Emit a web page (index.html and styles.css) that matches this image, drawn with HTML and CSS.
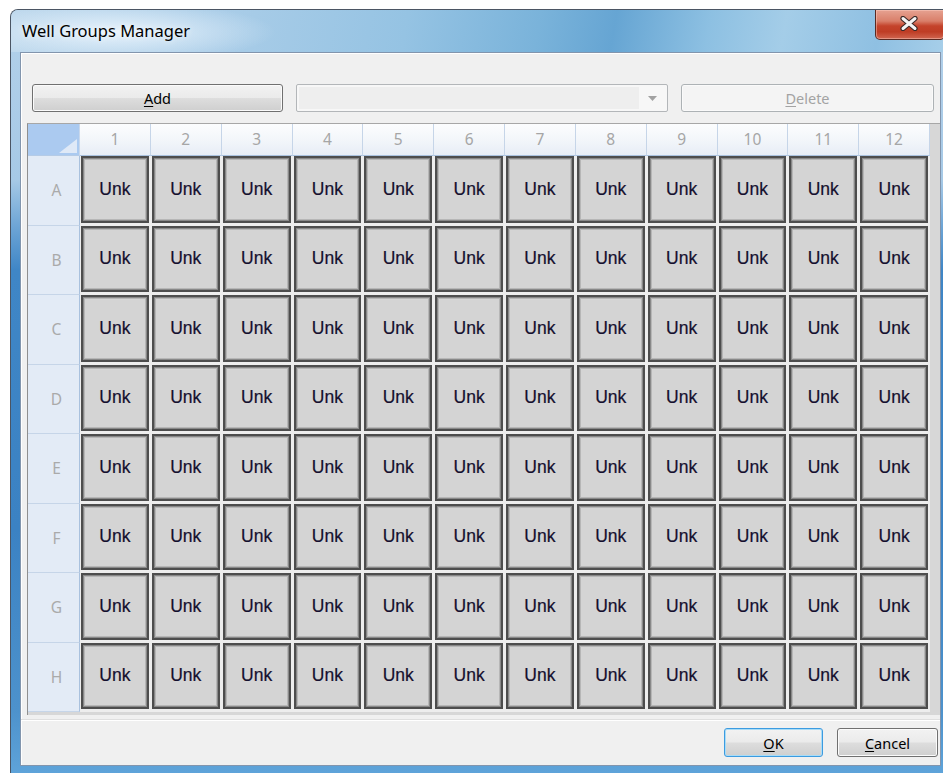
FILE: index.html
```html
<!DOCTYPE html>
<html lang="en">
<head>
<meta charset="utf-8">
<title>Well Groups Manager</title>
<link rel="stylesheet" href="styles.css">
</head>
<body>
<div class="window">
  <div class="titlebar">
    <span class="title">Well Groups Manager</span>
    <button class="close" type="button" aria-label="Close">
      <svg width="20" height="15" viewBox="0 0 20 15">
        <path d="M4 2.5 L16 12.5 M16 2.5 L4 12.5" stroke="#3b2a28" stroke-width="5.2" stroke-linecap="round" fill="none"/>
        <path d="M4 2.5 L16 12.5 M16 2.5 L4 12.5" stroke="#f4f4f4" stroke-width="3" stroke-linecap="round" fill="none"/>
      </svg>
    </button>
  </div>

  <div class="client">
    <div class="toolbar">
      <button class="btn add" type="button"><u>A</u>dd</button>
      <div class="combo">
        <span class="combo-field"></span>
        <span class="combo-arrow">
          <svg width="9" height="5" viewBox="0 0 9 5"><path d="M0 0 H9 L4.5 5 Z" fill="#a2a2a2"/></svg>
        </span>
      </div>
      <button class="btn delete" type="button" disabled><u>D</u>elete</button>
    </div>

    <div class="plate">
      <div class="plate-grid">
        <div class="corner">
          <svg width="18" height="14" viewBox="0 0 18 14"><path d="M0 14 L18 0 L18 14 Z" fill="#dfe9f7"/></svg>
        </div>
        <div class="colhead">1</div>
        <div class="colhead">2</div>
        <div class="colhead">3</div>
        <div class="colhead">4</div>
        <div class="colhead">5</div>
        <div class="colhead">6</div>
        <div class="colhead">7</div>
        <div class="colhead">8</div>
        <div class="colhead">9</div>
        <div class="colhead">10</div>
        <div class="colhead">11</div>
        <div class="colhead">12</div>

        <div class="rowhead">A</div>
        <div class="well">Unk</div><div class="well">Unk</div><div class="well">Unk</div><div class="well">Unk</div>
        <div class="well">Unk</div><div class="well">Unk</div><div class="well">Unk</div><div class="well">Unk</div>
        <div class="well">Unk</div><div class="well">Unk</div><div class="well">Unk</div><div class="well">Unk</div>

        <div class="rowhead">B</div>
        <div class="well">Unk</div><div class="well">Unk</div><div class="well">Unk</div><div class="well">Unk</div>
        <div class="well">Unk</div><div class="well">Unk</div><div class="well">Unk</div><div class="well">Unk</div>
        <div class="well">Unk</div><div class="well">Unk</div><div class="well">Unk</div><div class="well">Unk</div>

        <div class="rowhead">C</div>
        <div class="well">Unk</div><div class="well">Unk</div><div class="well">Unk</div><div class="well">Unk</div>
        <div class="well">Unk</div><div class="well">Unk</div><div class="well">Unk</div><div class="well">Unk</div>
        <div class="well">Unk</div><div class="well">Unk</div><div class="well">Unk</div><div class="well">Unk</div>

        <div class="rowhead">D</div>
        <div class="well">Unk</div><div class="well">Unk</div><div class="well">Unk</div><div class="well">Unk</div>
        <div class="well">Unk</div><div class="well">Unk</div><div class="well">Unk</div><div class="well">Unk</div>
        <div class="well">Unk</div><div class="well">Unk</div><div class="well">Unk</div><div class="well">Unk</div>

        <div class="rowhead">E</div>
        <div class="well">Unk</div><div class="well">Unk</div><div class="well">Unk</div><div class="well">Unk</div>
        <div class="well">Unk</div><div class="well">Unk</div><div class="well">Unk</div><div class="well">Unk</div>
        <div class="well">Unk</div><div class="well">Unk</div><div class="well">Unk</div><div class="well">Unk</div>

        <div class="rowhead">F</div>
        <div class="well">Unk</div><div class="well">Unk</div><div class="well">Unk</div><div class="well">Unk</div>
        <div class="well">Unk</div><div class="well">Unk</div><div class="well">Unk</div><div class="well">Unk</div>
        <div class="well">Unk</div><div class="well">Unk</div><div class="well">Unk</div><div class="well">Unk</div>

        <div class="rowhead">G</div>
        <div class="well">Unk</div><div class="well">Unk</div><div class="well">Unk</div><div class="well">Unk</div>
        <div class="well">Unk</div><div class="well">Unk</div><div class="well">Unk</div><div class="well">Unk</div>
        <div class="well">Unk</div><div class="well">Unk</div><div class="well">Unk</div><div class="well">Unk</div>

        <div class="rowhead">H</div>
        <div class="well">Unk</div><div class="well">Unk</div><div class="well">Unk</div><div class="well">Unk</div>
        <div class="well">Unk</div><div class="well">Unk</div><div class="well">Unk</div><div class="well">Unk</div>
        <div class="well">Unk</div><div class="well">Unk</div><div class="well">Unk</div><div class="well">Unk</div>
      </div>
    </div>

    <div class="footer">
      <button class="btn ok" type="button"><u>O</u>K</button>
      <button class="btn cancel" type="button"><u>C</u>ancel</button>
    </div>
  </div>
</div>
</body>
</html>
```

FILE: styles.css
```css
* {
  box-sizing: border-box;
}

html,
body {
  margin: 0;
  padding: 0;
  background: #ffffff;
  overflow: hidden;
}

body {
  width: 943px;
  height: 773px;
  font-family: "Noto Sans", "Open Sans", sans-serif;
}

/* ---- window frame ---- */
.window {
  margin: 9px 0 0 10px;
  width: 942px;
  height: 766px;
  border: 1px solid #4b5563;
  border-bottom: none;
  border-radius: 8px 8px 0 0;
  padding: 0 10px 9px 9px;
  display: flex;
  flex-direction: column;
  background: linear-gradient(to bottom, #b3d1ea 0px, #a6c9e6 170px, #6fa6d6 215px, #3f86c6 260px, #3b82c3 520px, #4d92cc 700px, #5fa4da 766px);
}

.titlebar {
  height: 42px;
  flex: none;
  margin: 0 -10px 0 -9px;
  padding-left: 11px;
  display: flex;
  align-items: center;
  border-radius: 7px 7px 0 0;
  background:
    radial-gradient(ellipse 160px 30px at 105px 22px, rgba(240, 248, 255, 0.85), rgba(240, 248, 255, 0) 100%),
    linear-gradient(100deg, #bcd7ec 0%, #aacde8 22%, #95c3e3 42%, #7ab3da 56%, #66a5d3 64%, #8dc0e2 74%, #a4cde8 82%, #8fc0e2 92%, #a9d0ea 100%);
}

.title {
  font-size: 16.5px;
  color: #000000;
  padding-bottom: 1px;
  text-shadow: 0 0 6px rgba(255, 255, 255, 0.9);
}

.close {
  align-self: flex-start;
  margin-left: auto;
  margin-right: 6px;
  width: 70px;
  height: 30px;
  padding: 0;
  border: 1px solid #5a2a22;
  border-top: none;
  border-radius: 0 0 5px 5px;
  background: linear-gradient(to bottom, #e6a291 0%, #d97f6a 38%, #c4432b 55%, #bf3d25 75%, #d06650 100%);
  box-shadow: inset 0 0 0 1px rgba(255, 210, 200, 0.45);
  display: flex;
  align-items: center;
  justify-content: center;
}

.close svg {
  display: block;
  margin-right: 2px;
  margin-bottom: 2px;
}

/* ---- client area ---- */
.client {
  flex: 1;
  background: #f0f0f0;
  border: 1px solid #8295ad;
  box-shadow: inset 1px 1px 0 #ffffff;
  display: flex;
  flex-direction: column;
}

.toolbar {
  margin-top: 31px;
  padding-left: 11px;
  height: 28px;
  display: flex;
  gap: 13px;
}

.btn {
  height: 100%;
  padding: 0;
  font-family: "Noto Sans", "Open Sans", sans-serif;
  font-size: 14.5px;
  color: #000000;
  border: 1px solid #707070;
  border-radius: 3px;
  background: linear-gradient(to bottom, #f2f2f2 0%, #ebebeb 48%, #dddddd 52%, #cfcfcf 100%);
  box-shadow: inset 0 0 0 1px #fbfbfb;
}

.btn u {
  text-decoration-thickness: 1px;
  text-underline-offset: 2px;
}

.add {
  width: 251px;
}

.delete {
  width: 253px;
  color: #a3a3a3;
  border-color: #adb2b5;
  background: #f4f4f4;
  box-shadow: inset 0 0 0 1px #fafafa;
}

.combo {
  width: 372px;
  height: 100%;
  border: 1px solid #b3b6b9;
  border-radius: 2px;
  background: #f7f7f7;
  padding: 2px;
  display: flex;
}

.combo-field {
  flex: 1;
  background: #eeeeee;
}

.combo-arrow {
  width: 26px;
  display: flex;
  align-items: center;
  justify-content: center;
  padding-top: 1px;
}

.combo-arrow svg {
  display: block;
}

/* ---- plate grid ---- */
.plate {
  margin: 11px 0 0 6px;
  border-left: 1px solid #8f8f8f;
  border-top: 1px solid #a7a7a7;
  background: #d7d7d7;
  padding-bottom: 3px;
}

.plate-grid {
  width: 902px;
  height: 588px;
  display: grid;
  grid-template-columns: 52px repeat(12, 1fr);
  grid-template-rows: 32px repeat(8, 1fr);
  background: #ededed;
}

.corner {
  background: #abcaf0;
  border-right: 1px solid #c9d8ec;
  border-bottom: 1px solid #b5cbe6;
  display: flex;
  justify-content: flex-end;
  align-items: flex-end;
  padding: 0 2px 2px 0;
}

.corner svg {
  display: block;
}

.colhead {
  background: linear-gradient(to bottom, #fcfdfe 0%, #f3f6fa 50%, #e7edf6 100%);
  border-right: 1px solid #c6d5e8;
  border-bottom: 1px solid #a9c1de;
  display: flex;
  align-items: center;
  justify-content: center;
  font-size: 15.5px;
  color: #a6a6a6;
  padding-bottom: 1px;
}

.rowhead {
  background: #e3ebf6;
  border-right: 1px solid #a9c1de;
  border-bottom: 1px solid #c6d5e8;
  display: flex;
  align-items: center;
  justify-content: center;
  font-size: 15.5px;
  color: #aaaaaa;
  padding-left: 6px;
}

.well {
  margin: 0 2px 3px 1px;
  border: 2px solid #4d4d4d;
  box-shadow: inset 0 0 0 1px #888888, inset 0 0 0 2px #b6b6b6;
  background: #d4d4d4;
  display: flex;
  align-items: center;
  justify-content: center;
  font-family: "Liberation Sans", Arial, sans-serif;
  font-size: 17.5px;
  color: #140f2e;
  -webkit-text-stroke: 0.2px #140f2e;
}

/* ---- dialog buttons ---- */
.footer {
  margin-top: 4px;
  border-top: 1px solid #dfdfdf;
  box-shadow: inset 0 1px 0 #ffffff;
  padding: 8px 2px 7px 0;
  height: 45px;
  display: flex;
  justify-content: flex-end;
  gap: 14px;
}

.ok {
  width: 99px;
  border-color: #3c9be0;
  box-shadow: inset 0 0 0 1px #a9dcf7;
}

.cancel {
  width: 101px;
}
```
